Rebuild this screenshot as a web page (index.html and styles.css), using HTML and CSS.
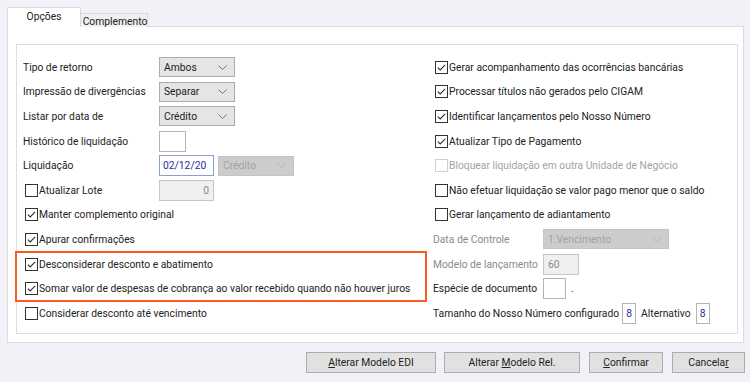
FILE: index.html
```html
<!DOCTYPE html>
<html lang="pt-BR">
<head>
  <meta charset="UTF-8">
  <title>Opções de retorno bancário</title>
  <link rel="stylesheet" href="styles.css">
</head>
<body>
  <div class="tabs">
    <div class="tab active">Opções</div>
    <div class="tab">Complemento</div>
  </div>

  <div class="tab-page">
    <div class="group">
      <!-- left column -->
      <div class="col">
        <div class="row">
          <span class="label">Tipo de retorno</span>
          <div class="select sel-76"><span>Ambos</span><svg class="chev" viewBox="0 0 9 5"><polyline points="0.5,0.5 4.5,4.5 8.5,0.5"/></svg></div>
        </div>
        <div class="row">
          <span class="label">Impressão de divergências</span>
          <div class="select sel-76"><span>Separar</span><svg class="chev" viewBox="0 0 9 5"><polyline points="0.5,0.5 4.5,4.5 8.5,0.5"/></svg></div>
        </div>
        <div class="row">
          <span class="label">Listar por data de</span>
          <div class="select sel-76"><span>Crédito</span><svg class="chev" viewBox="0 0 9 5"><polyline points="0.5,0.5 4.5,4.5 8.5,0.5"/></svg></div>
        </div>
        <div class="row">
          <span class="label">Histórico de liquidação</span>
          <div class="input in-27"></div>
        </div>
        <div class="row">
          <span class="label">Liquidação</span>
          <div class="input date">02/12/20</div>
          <div class="select sel-76 disabled gap-4"><span>Crédito</span><svg class="chev" viewBox="0 0 9 5"><polyline points="0.5,0.5 4.5,4.5 8.5,0.5"/></svg></div>
        </div>
        <div class="row">
          <label class="check label"><span class="box"></span>Atualizar Lote</label>
          <div class="input in-55 readonly num">0</div>
        </div>
        <div class="row">
          <label class="check"><span class="box"><svg viewBox="0 0 13 13"><polyline points="2.2,6.6 5,9.4 10.8,3.4"/></svg></span>Manter complemento original</label>
        </div>
        <div class="row">
          <label class="check"><span class="box"><svg viewBox="0 0 13 13"><polyline points="2.2,6.6 5,9.4 10.8,3.4"/></svg></span>Apurar confirmações</label>
        </div>

        <div class="highlight">
          <div class="row">
            <label class="check"><span class="box"><svg viewBox="0 0 13 13"><polyline points="2.2,6.6 5,9.4 10.8,3.4"/></svg></span>Desconsiderar desconto e abatimento</label>
          </div>
          <div class="row">
            <label class="check"><span class="box"><svg viewBox="0 0 13 13"><polyline points="2.2,6.6 5,9.4 10.8,3.4"/></svg></span>Somar valor de despesas de cobrança ao valor recebido quando não houver juros</label>
          </div>
        </div>

        <div class="row">
          <label class="check"><span class="box"></span>Considerar desconto até vencimento</label>
        </div>
      </div>

      <!-- right column -->
      <div class="col right">
        <div class="row">
          <label class="check"><span class="box"><svg viewBox="0 0 13 13"><polyline points="2.2,6.6 5,9.4 10.8,3.4"/></svg></span>Gerar acompanhamento das ocorrências bancárias</label>
        </div>
        <div class="row">
          <label class="check"><span class="box"><svg viewBox="0 0 13 13"><polyline points="2.2,6.6 5,9.4 10.8,3.4"/></svg></span>Processar títulos não gerados pelo CIGAM</label>
        </div>
        <div class="row">
          <label class="check"><span class="box"><svg viewBox="0 0 13 13"><polyline points="2.2,6.6 5,9.4 10.8,3.4"/></svg></span>Identificar lançamentos pelo Nosso Número</label>
        </div>
        <div class="row">
          <label class="check"><span class="box"><svg viewBox="0 0 13 13"><polyline points="2.2,6.6 5,9.4 10.8,3.4"/></svg></span>Atualizar Tipo de Pagamento</label>
        </div>
        <div class="row">
          <label class="check disabled"><span class="box"></span>Bloquear liquidação em outra Unidade de Negócio</label>
        </div>
        <div class="row">
          <label class="check"><span class="box"></span>Não efetuar liquidação se valor pago menor que o saldo</label>
        </div>
        <div class="row">
          <label class="check"><span class="box"></span>Gerar lançamento de adiantamento</label>
        </div>
        <div class="row">
          <span class="label label-r muted">Data de Controle</span>
          <div class="select sel-126 disabled"><span>1.Vencimento</span><svg class="chev" viewBox="0 0 9 5"><polyline points="0.5,0.5 4.5,4.5 8.5,0.5"/></svg></div>
        </div>
        <div class="row">
          <span class="label label-r muted">Modelo de lançamento</span>
          <div class="input in-36 readonly">60</div>
        </div>
        <div class="row">
          <span class="label label-r">Espécie de documento</span>
          <div class="input in-23"></div>
          <span class="dot">.</span>
        </div>
        <div class="row">
          <span class="label-auto">Tamanho do Nosso Número configurado</span>
          <div class="input digit gap-3">8</div>
          <span class="label-auto gap-4">Alternativo</span>
          <div class="input digit gap-5">8</div>
        </div>
      </div>
    </div>
  </div>

  <div class="buttons">
    <button class="btn btn-edi"><u>A</u>lterar Modelo EDI</button>
    <button class="btn btn-rel">Alterar <u>M</u>odelo Rel.</button>
    <button class="btn btn-ok"><u>C</u>onfirmar</button>
    <button class="btn btn-cancel">Cancela<u>r</u></button>
  </div>
</body>
</html>
```

FILE: styles.css
```css
body {
  margin: 0;
  background-color: #f1f1f7;
  font-family: Roboto, "Liberation Sans", sans-serif;
  font-size: 10.3px;
  color: #222;
  width: 750px;
  height: 382px;
  overflow: hidden;
}

/* tabs */
.tabs {
  display: flex;
  align-items: flex-end;
  padding: 7px 0 0 7px;
  height: 20px;
}

.tab {
  box-sizing: border-box;
  border: 1px solid #dadada;
  border-bottom: none;
  display: flex;
  align-items: center;
  justify-content: center;
  white-space: nowrap;
}

.tab.active {
  position: relative;
  z-index: 1;
  width: 74px;
  height: 20px;
  background-color: #fff;
  padding-bottom: 2px;
}

.tab:not(.active) {
  width: 67px;
  height: 14px;
  background-color: #f0f0f0;
  border-left: none;
  padding: 1px 0 0 2px;
}

.tab-page {
  box-sizing: border-box;
  margin: -1px 0 0 7px;
  width: 737px;
  height: 317px;
  background-color: #fff;
  border: 1px solid #dcdcdc;
  padding-top: 17px;
}

.group {
  box-sizing: border-box;
  margin: 0 5px 0 8px;
  height: 290px;
  border: 1px solid #dedede;
  padding: 10px 0 0 6px;
  display: grid;
  grid-template-columns: 409px 1fr;
}

.col {
  display: flex;
  flex-direction: column;
}

.row {
  height: 24.6px;
  display: flex;
  align-items: center;
  white-space: nowrap;
}

.label {
  width: 136px;
  flex-shrink: 0;
}

.label-r {
  width: 110px;
  flex-shrink: 0;
  padding-left: 1px;
}

.label-auto {
  padding-left: 1px;
}

.muted {
  color: #8a8a8a;
}

/* checkboxes */
.check {
  display: flex;
  align-items: center;
}

.box {
  box-sizing: border-box;
  width: 13px;
  height: 13px;
  margin: 0 1px 0 2px;
  border: 1px solid #333;
  background-color: #fff;
  flex-shrink: 0;
}

.right .box {
  margin-left: 3px;
}

.box svg {
  display: block;
  width: 11px;
  height: 11px;
  fill: none;
  stroke: #2b2b2b;
  stroke-width: 1.2;
}

.check.disabled {
  color: #a3a3a3;
}

.check.disabled .box {
  border-color: #cfcfcf;
}

/* orange highlight around two options */
.highlight {
  margin: -1px 5px -1px -8px;
  padding-left: 6px;
  border: 2px solid #fb5a22;
}

.highlight .row {
  height: 23.6px;
}

/* combo boxes */
.select {
  box-sizing: border-box;
  height: 20px;
  display: flex;
  align-items: center;
  justify-content: space-between;
  padding: 0 7px 0 4px;
  background-color: #e5e5e5;
  border: 1px solid #acacac;
}

.sel-76 {
  width: 76px;
}

.sel-126 {
  width: 126px;
}

.chev {
  width: 9px;
  height: 5px;
  fill: none;
  stroke: #777;
  stroke-width: 1;
}

.select.disabled {
  background-color: #cccccc;
  border-color: #c4c4c4;
  color: #a3a3a3;
}

.select.disabled .chev {
  stroke: #b3b3b3;
}

/* text inputs */
.input {
  box-sizing: border-box;
  height: 21px;
  display: flex;
  align-items: center;
  padding: 0 4px;
  background-color: #fff;
  border: 1px solid #b4b4b4;
}

.in-27 { width: 27px; }
.in-23 { width: 23px; }
.in-36 { width: 36px; }
.in-55 { width: 55px; }

.date {
  width: 55px;
  border-color: #8a9ed8;
  color: #2b2b96;
  padding-left: 3px;
}

.readonly {
  background-color: #f0f0f0;
  border-color: #c6c6c6;
  color: #8a8a8a;
}

.num {
  justify-content: flex-end;
}

.digit {
  width: 14px;
  justify-content: center;
  padding: 0;
  color: #2b2b96;
}

.dot {
  margin-left: 5px;
}

.gap-3 { margin-left: 3px; }
.gap-4 { margin-left: 4px; }
.gap-5 { margin-left: 5px; }

/* bottom buttons */
.buttons {
  display: flex;
  justify-content: flex-end;
  padding: 9px 5px 0 0;
}

.btn {
  box-sizing: border-box;
  height: 21px;
  margin-left: 8px;
  font-family: Roboto, "Liberation Sans", sans-serif;
  font-size: 10.3px;
  color: #222;
  background-color: #e1e1e1;
  border: 1px solid #adadad;
  padding: 0;
}

.btn-edi { width: 130px; }
.btn-rel { width: 136px; }
.btn-ok { width: 74px; margin-left: 9px; }
.btn-cancel { width: 73px; margin-left: 9px; }
```
